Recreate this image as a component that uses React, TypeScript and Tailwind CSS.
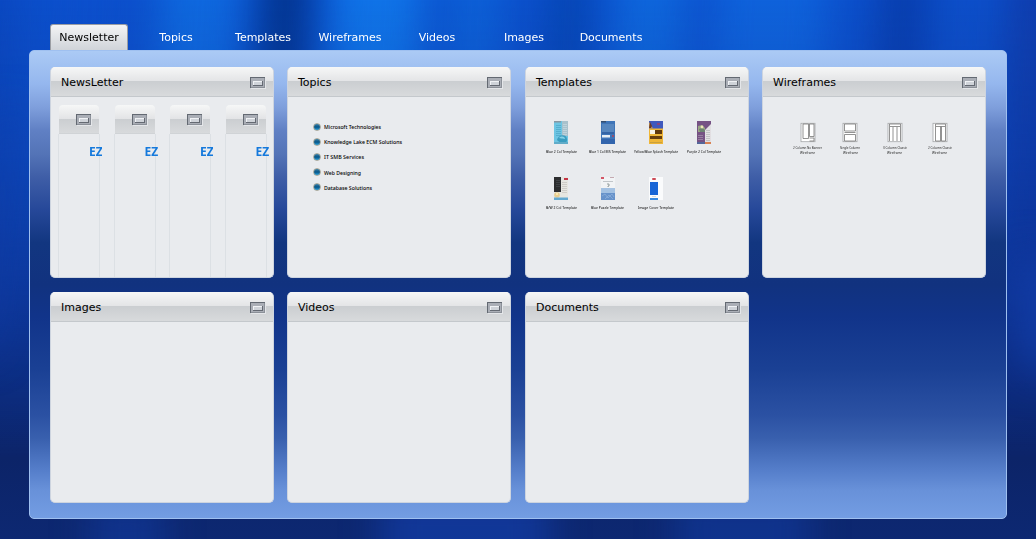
import React, { type ReactNode } from "react";

const tabs = ["Newsletter", "Topics", "Templates", "Wireframes", "Videos", "Images", "Documents"];
const topics = ["Microsoft Technologies", "Knowledge Lake ECM Solutions", "IT SMB Services", "Web Designing", "Database Solutions"];

function Backdrop() {
  const folds = [
    [-10, 70, "#0a3fb6", 0.5], [95, 60, "#0e4fd0", 0.3], [205, 80, "#1070e4", 0.75], [290, 46, "#02338a", 0.95],
    [382, 90, "#117ff0", 0.75], [480, 50, "#0e6ce0", 0.6], [574, 38, "#0645b0", 0.9], [655, 70, "#0f6fe2", 0.7],
    [775, 110, "#1068e0", 0.75], [908, 50, "#0838a4", 0.75], [965, 30, "#104cc4", 0.5], [1045, 70, "#103aa8", 0.8],
  ] as const;
  return (
    <svg className="absolute inset-0 size-full" viewBox="0 0 1036 539" preserveAspectRatio="none" aria-hidden="true">
      <defs>
        <filter id="soft" filterUnits="userSpaceOnUse" x="-150" y="-150" width="1336" height="839" colorInterpolationFilters="sRGB">
          <feGaussianBlur stdDeviation="18 22" />
        </filter>
        <linearGradient id="night" x1="0" y1="0" x2="0" y2="1">
          <stop offset="0" stopColor="#0c2c80" stopOpacity="0" />
          <stop offset=".28" stopColor="#0c2f8c" stopOpacity=".25" />
          <stop offset=".55" stopColor="#0d2d86" stopOpacity=".7" />
          <stop offset=".85" stopColor="#0c2468" stopOpacity="1" />
          <stop offset="1" stopColor="#0d2872" stopOpacity="1" />
        </linearGradient>
      </defs>
      <rect width="1036" height="539" fill="#0c50cc" />
      <g filter="url(#soft)">
        {folds.map(([x, w, c, o]) => (
          <path key={x} d={`M${x - w / 2} -100H${x + w / 2}L${x + w / 2 - 35} 640H${x - w / 2 - 35}Z`} fill={c} opacity={o} />
        ))}
      </g>
      <rect width="1036" height="539" fill="url(#night)" />
      <g fill="#123da8" filter="url(#soft)">
        <path d="M0 110L22 110L0 350H-30Z" opacity=".5" />
        <path d="M90 490H165V640H90Z" opacity=".5" />
        <path d="M380 480H550V640H380Z" opacity=".7" />
        <path d="M675 480H810V640H675Z" opacity=".5" />
        <path d="M1010 260H1070V370H1020Z" opacity=".8" />
      </g>
    </svg>
  );
}

function RestoreIcon() {
  return (
    <svg className="block h-3 w-4 shrink-0" viewBox="0 0 16 12" aria-hidden="true" shapeRendering="crispEdges">
      <path d="M1 11.5H15.5M15.5 1V12" stroke="#e4e6e9" />
      <rect x="0" y="0" width="15" height="11" fill="#8b9098" />
      <rect x="0" y="0" width="15" height="1" fill="#636972" />
      <rect x="0" y="0" width="1" height="11" fill="#636972" />
      <rect x="1" y="1" width="13" height="9" fill="#aaaeb6" />
      <rect x="3" y="4" width="10" height="5" fill="#646972" />
      <rect x="3" y="4" width="9" height="4" fill="#f0f2f5" />
      <rect x="4" y="5" width="8" height="3" fill="#cfd3d9" />
    </svg>
  );
}

const headerFill = "bg-[linear-gradient(180deg,#f6f7f7_0%,#e3e4e6_49%,#cbced1_50%,#d8dadc_100%)]";

function Card({ title, children }: { title: string; children?: ReactNode }) {
  return (
    <section className="h-[211px] w-[224px] overflow-hidden rounded-[5px] border border-t-0 border-[#cdd4df] bg-[#e9ebee]">
      <header className={`flex h-[30px] items-center justify-between border-b border-[#c4c8cc] pl-[10px] pr-[7px] ${headerFill}`}>
        <h2 className="pt-[2px] text-[11px] leading-[14px] text-black">{title}</h2>
        <div className="pt-[2px]"><RestoreIcon /></div>
      </header>
      {children}
    </section>
  );
}

function MiniNewsletter() {
  return (
    <div className="h-[180px] w-[55.5px] shrink-0">
      <div className={`ml-px flex h-[29px] w-[40px] items-center rounded-t-[4px] border-b border-[#d0d3d6] pl-[17px] pt-[2px] ${headerFill}`}>
        <RestoreIcon />
      </div>
      <div className="h-[151px] w-[42px] border-x border-[#dce0e4] pt-[10px]">
        <div className="ml-[30px] w-[13px] overflow-hidden font-['Noto_Sans',sans-serif] text-[12px] font-bold leading-[15px] text-[#1579dc]">EZ</div>
      </div>
    </div>
  );
}

function Lines({ x, y, w, n, c }: { x: number; y: number; w: number; n: number; c: string }) {
  return <g fill={c}>{Array.from({ length: n }, (_, i) => <rect key={i} x={x} y={y + i * 2} width={w} height=".8" />)}</g>;
}

const templates: { label: string; width: number; art: ReactNode }[] = [
  { label: "Blue 2 Col Template", width: 31, art: <><rect width="14" height="23" fill="#6dc5e3" /><rect x="8" width="6" height="15" fill="#a9c1cc" /><rect width="7" height="1.5" fill="#8797a2" /><Lines x={2} y={4} w={5} n={6} c="#4fa9ca" /><Lines x={9} y={3} w={4} n={6} c="#c4d8df" /><path d="M3 19C4 14 12 12 13 18S5 22 3 19" fill="#3a9dc0" /><path d="M5 17C8 14 11 16 11 18" fill="#85d2e7" /><rect y="21" width="14" height="2" fill="#61acc9" /></> },
  { label: "Blue 1 Col MS Template", width: 37, art: <><rect width="14" height="23" fill="#3f75b8" /><rect x="1" y="3" width="12" height="8" fill="#5787bf" /><rect width="5" height="1.5" fill="#344e70" /><path d="M1 12H13" stroke="#264d8c" strokeWidth=".8" /><rect x="1" y="14" width="8" height="2.5" fill="#e7eef5" /><rect x="11" y="14" width="2" height="2" fill="#965171" /><rect y="18" width="14" height="5" fill="#3265ad" /></> },
  { label: "Yellow/Blue Splash Template", width: 44, art: <><rect width="14" height="23" fill="#efb638" /><rect width="14" height="7.5" fill="#4059bd" /><path d="M0 1L4 7.5H0Z" fill="#d7a24c" /><path d="M1 1L3 5L2 7H0Z" fill="#65392d" /><rect x="8" y="2" width="3" height="2" fill="#88457e" /><rect x="1" y="9" width="12" height="4" fill="#61390d" /><rect x="1" y="9" width="5" height="4" fill="#f9f3e6" /><rect x="1" y="15" width="12" height="3" fill="#673e0e" /><rect x="1" y="21" width="12" height="1" fill="#c9a13f" /></> },
  { label: "Purple 2 Col Template", width: 34, art: <><rect width="14" height="23" fill="#765284" /><path d="M14 3V22H8V9Z" fill="#e2dfe2" /><path d="M1 5L5 4L8 7L8 11L1 11Z" fill="#9aa784" /><path d="M2 8L5 7L8 9V11H3Z" fill="#6c8371" /><circle cx="5" cy="6" r="1.4" fill="#efe5b7" /><Lines x={9} y={9} w={4} n={6} c="#b9babd" /><Lines x={1} y={14} w={5} n={3} c="#a08ba8" /><rect y="21" width="14" height="2" fill="#d98355" /><rect y="21" width="8" height="2" fill="#54669b" /></> },
  { label: "B/W 2 Col Template", width: 31, art: <><rect width="14" height="23" fill="#e6e6e1" /><rect width="7" height="15" fill="#2c2d2f" /><Lines x={2} y={3} w={4} n={4} c="#45484c" /><rect x="10" y="1" width="4" height="2" fill="#c53545" /><Lines x={8} y={5} w={5} n={6} c="#c8c6c2" /><circle cx="3" cy="18" r="2.8" fill="#e8cd90" /><circle cx="3" cy="17" r="1" fill="#fff1bf" /><rect y="20.5" width="14" height="2.5" fill="#63a9d1" /></> },
  { label: "Blue Puzzle Template", width: 33, art: <><rect width="14" height="23" fill="#f1f3f5" /><rect width="3" height="2" fill="#d45666" /><rect x="9" width="4" height="1" fill="#c4aab1" /><Lines x={2} y={4} w={10} n={1} c="#b4b9be" /><path d="M6 7H8V9H7V10" stroke="#828a8c" fill="none" strokeWidth=".8" /><rect y="11" width="14" height="12" fill="#a3c1e2" /><rect y="16" width="14" height="7" fill="#6792ca" /><path d="M1 19L4 17L7 21L11 17L13 20M4 22L8 18L12 22" stroke="#8fb1dc" strokeWidth=".7" fill="none" /></> },
  { label: "Image Cover Template", width: 36, art: <><rect width="14" height="23" fill="#fafbfc" /><rect x="3" y="1" width="4" height="2" rx="1" fill="#cc4b57" /><rect x="1" y="5" width="8" height="13" fill="#1765d6" /><rect x="3" y="19" width="4" height=".7" fill="#c6ced6" /><rect x="1" y="21" width="8" height="2" fill="#398ae0" /></> },
];

function FitText({ text, width, className }: { text: string; width: number; className: string }) {
  return (
    <svg className="block h-[7px] overflow-visible" style={{ width }} aria-label={text}>
      <text x="0" y="5" textLength={width} lengthAdjust="spacingAndGlyphs" className={className}>{text}</text>
    </svg>
  );
}

const topicWidths = [57, 78, 40, 37, 48];

const wireframes: { first: string; width: number; art: ReactNode }[] = [
  { first: "2 Column No Banner", width: 29, art: <path d="M2 1H7.5V15.5H2ZM8.5 1H13V13.5H8.5ZM8.5 15H13V18H8.5" /> },
  { first: "Single Column", width: 20, art: <path d="M1.5 1H12.5V8H1.5ZM1.5 9.5H12.5M1.5 11.5H12.5V18H1.5Z" /> },
  { first: "3 Column Classic", width: 24, art: <path d="M1.5 1H12.5V3.5H1.5ZM1.5 3.5V18M12.5 3.5V18M5 4V18M9 4V18" /> },
  { first: "2 Column Classic", width: 24, art: <path d="M2.5 1H12.5V3.5H2.5ZM2.5 3.5V18H7.5V3.5M8.5 3.5V18H12.5V3.5" /> },
];

export default function App() {
  return (
    <main className="relative h-[539px] w-[1036px] overflow-hidden bg-[#0c3baa] font-['DejaVu_Sans',sans-serif]">
      <Backdrop />
      <div className="relative pl-[29px] pt-6">
        <nav className="flex h-[26px] gap-[9px] pl-[21px]">
          {tabs.map((tab, i) => (
            <button key={tab} className={i === 0
              ? "w-[78px] shrink-0 rounded-t-[3px] border border-b-0 border-[#9a9da3] bg-linear-to-b from-[#f3f4f5] to-[#d0d4d9] pt-px text-[11px] leading-[14px] text-black"
              : "w-[78px] shrink-0 pt-[2px] text-[11px] leading-[14px] text-white"}>{tab}</button>
          ))}
        </nav>
        <div className="h-[469px] w-[978px] rounded-[5px] border border-[#9fc0f0] bg-[linear-gradient(180deg,#abcaf5_0%,#95b7ee_7%,#7f9fdc_12%,#6080c4_17%,#5474b7_22%,#3f5ea7_27%,#264899_34%,#123680_41%,#11327f_50%,#11348a_57%,#1a4094_68%,#2b51a3_78%,#3960ae_83%,#567fcb_90%,#6891d9_94%,#739de3_100%)] pl-[20px] pt-[16px]">
          <div className="grid w-[937px] grid-cols-[224px_225px_224px_225px] gap-x-[13px] gap-y-[14px]">
            <Card title="NewsLetter">
              <div className="flex overflow-hidden pl-[7px] pt-[8px]">
                {[0, 1, 2, 3].map((n) => <MiniNewsletter key={n} />)}
              </div>
            </Card>
            <Card title="Topics">
              <ul className="flex flex-col gap-[0.2px] pl-[25px] pt-[22px]">
                {topics.map((topic, i) => (
                  <li key={topic} className="flex h-[15px] items-center gap-[3px]">
                    <span className="size-2 rounded-full border border-[#a9a99b] bg-[linear-gradient(#3982ad,#075586_50%,#249edc)]" />
                    <div className="pt-[2px]">
                      <FitText text={topic} width={topicWidths[i]} className="fill-black font-['Noto_Sans',sans-serif] text-[6px] font-medium" />
                    </div>
                  </li>
                ))}
              </ul>
            </Card>
            <Card title="Templates">
              <div className="grid grid-cols-[46px_47px_50px_46px] gap-y-[23px] pl-[12px] pt-[24px]">
                {templates.map((t) => (
                  <figure key={t.label} className="flex h-[33px] flex-col items-center">
                    <svg className="block h-[23px] w-[14px] shrink-0" viewBox="0 0 14 23">{t.art}</svg>
                    <figcaption className="mt-[4px]">
                      <FitText text={t.label} width={t.width} className="fill-black font-['Noto_Sans',sans-serif] text-[4px]" />
                    </figcaption>
                  </figure>
                ))}
              </div>
            </Card>
            <Card title="Wireframes">
              <div className="grid grid-cols-[41px_44px_45px_45px] pl-[24px] pt-[26px]">
                {wireframes.map((w) => (
                  <figure key={w.first} className="flex flex-col items-center">
                    <svg className="block h-[19px] w-[14px] overflow-visible" viewBox="0 0 14 19" fill="none" stroke="#777" strokeWidth=".8">
                      <rect x="0" y=".3" width="14" height="18.4" fill="#fff" stroke="#a4a6a8" />{w.art}
                    </svg>
                    <figcaption className="flex flex-col items-center pt-[2px]">
                      <FitText text={w.first} width={w.width} className="fill-[#222] font-['Noto_Sans',sans-serif] text-[3.8px]" />
                      <div className="-mt-[2px]"><FitText text="Wireframe" width={15} className="fill-[#222] font-['Noto_Sans',sans-serif] text-[3.8px]" /></div>
                    </figcaption>
                  </figure>
                ))}
              </div>
            </Card>
            <Card title="Images" />
            <Card title="Videos" />
            <Card title="Documents" />
          </div>
        </div>
      </div>
    </main>
  );
}
